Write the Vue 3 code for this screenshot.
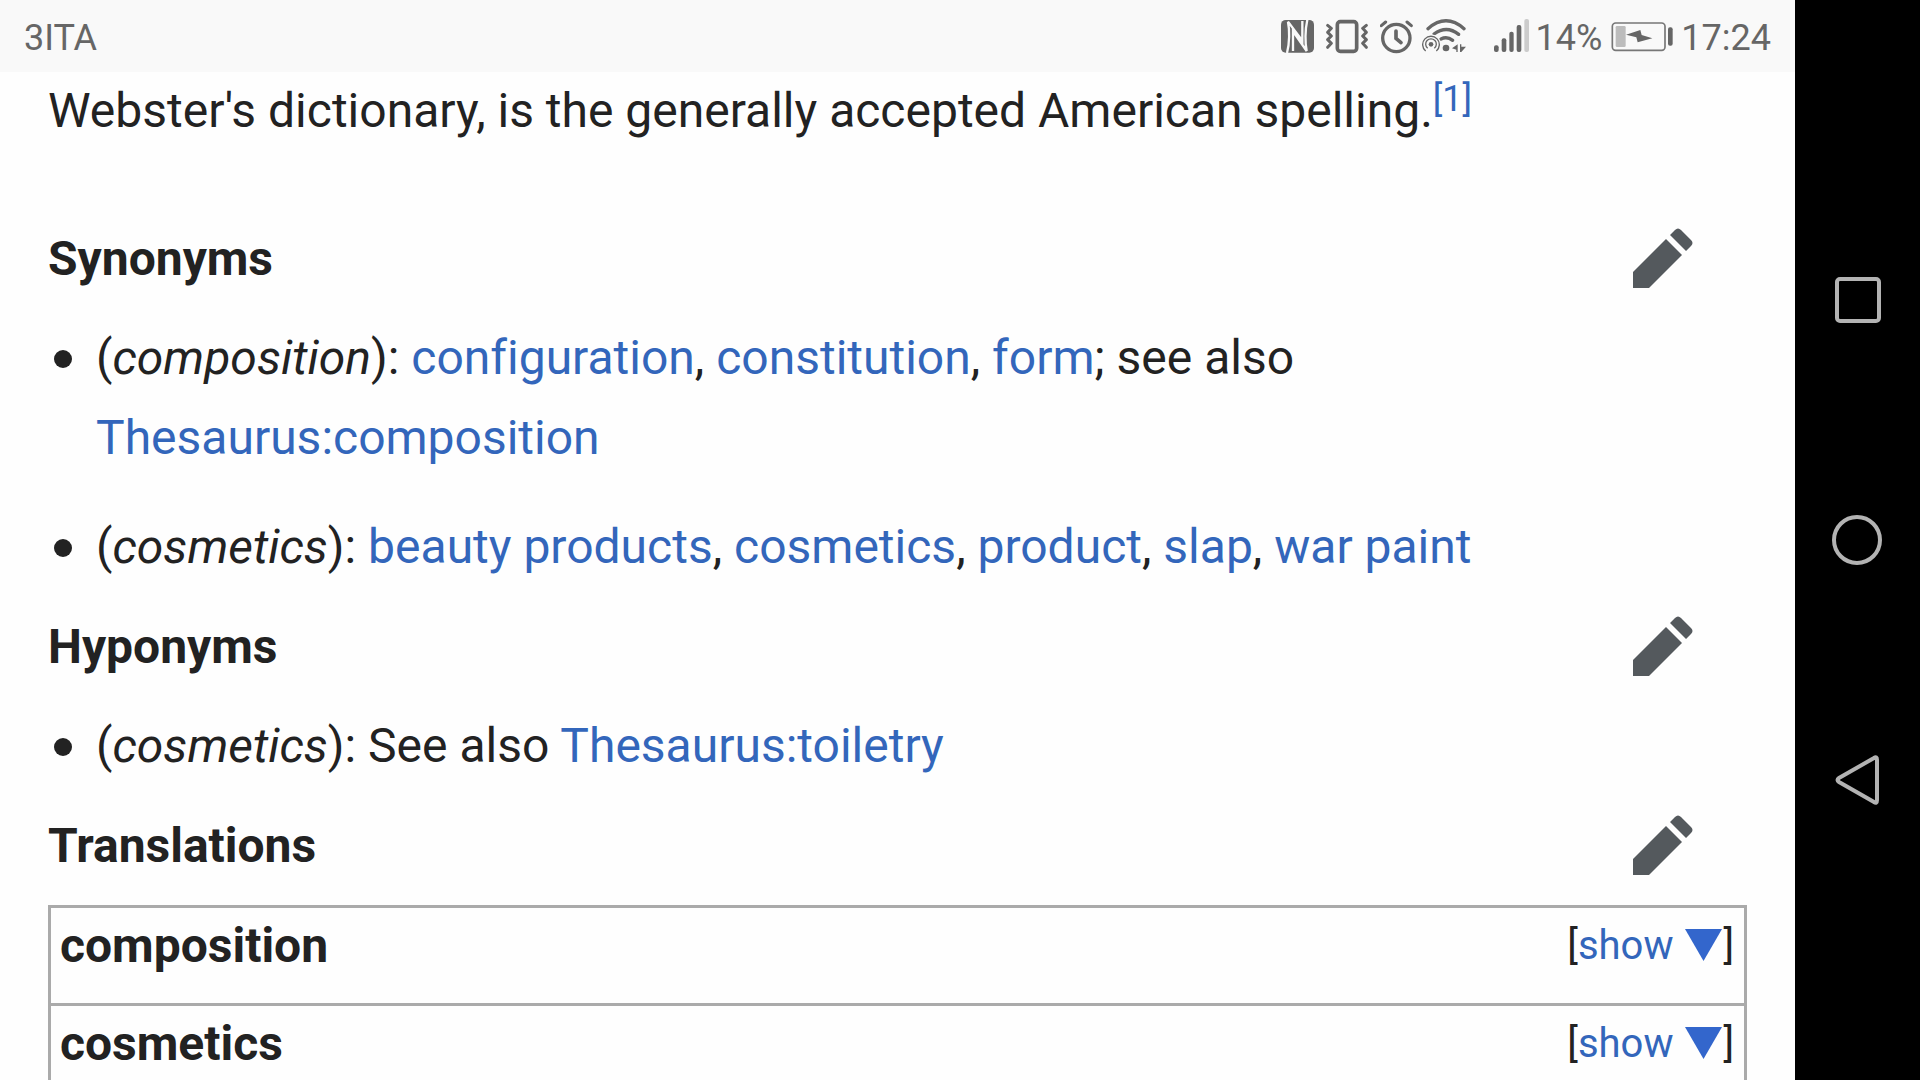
<script setup>
const translations = ['composition', 'cosmetics']
</script>

<template>
  <div class="screen">
    <div class="app">
      <header class="status">
        <span class="label carrier">3ITA</span>
        <svg class="nfc" viewBox="33 54 99 108" aria-label="NFC">
          <rect x="33" y="60" width="99" height="98" rx="14" fill="#666" />
          <path d="M51 159C59 130 59 90 54 65L97 122V63M112 59C105 90 105 130 110 153L69 94V153" fill="none" stroke="#f9f9f9" stroke-width="7" />
        </svg>
        <svg class="vibrate" viewBox="168 54 126 108" aria-label="Vibrate">
          <g fill="none" stroke="#666" stroke-linecap="round" stroke-linejoin="round">
            <rect x="202" y="65" width="58" height="89" rx="9" stroke-width="11" />
            <path d="M173 76l11 9-11 12 11 11-11 11 11 11-11 12M289 76l-11 9 11 12-11 11 11 11-11 11 11 12" stroke-width="9" />
          </g>
        </svg>
        <svg class="alarm" viewBox="331 54 99 108" aria-label="Alarm">
          <g fill="none" stroke="#666" stroke-linecap="round">
            <circle cx="380" cy="114" r="41" stroke-width="10" />
            <path d="M379 93V115L394 128" stroke-width="11" />
            <path d="M335 77L348 66M425 77L412 66" stroke-width="9" />
          </g>
        </svg>
        <svg class="wifi" viewBox="456 54 135 108" aria-label="Wi-Fi">
          <g fill="none" stroke="#666">
            <path d="M474 86Q528 39 582 86" stroke-width="10" stroke-linecap="round" />
            <path d="M492 102Q530 74 566 103" stroke-width="10" stroke-linecap="round" />
            <path d="M513 117Q531 108 548 121" stroke-width="10" stroke-linecap="round" />
            <circle cx="483" cy="132" r="29" fill="#f9f9f9" stroke="none" />
            <path d="M467 153A25 25 0 1 1 499 153" stroke-width="4" />
            <path d="M473 145A16 16 0 1 1 493 145" stroke-width="4" />
          </g>
          <g fill="#666">
            <circle cx="483" cy="133" r="7" />
            <circle cx="528" cy="144" r="10" />
            <path d="M546 145L563 133V156H559V149ZM570 133H574V140H588L574 156H570Z" />
          </g>
        </svg>
        <svg class="signal" viewBox="672 54 108 108" aria-label="Signal">
          <g fill="#666">
            <rect x="672" y="136" width="14" height="20" rx="6" />
            <rect x="695" y="115" width="14" height="41" rx="6" />
            <rect x="718" y="95" width="13" height="61" rx="6" />
            <rect x="740" y="75" width="14" height="81" rx="6" />
          </g>
          <rect x="763" y="57" width="14" height="99" rx="6" fill="#ccc" />
        </svg>
        <span class="label">14%</span>
        <svg class="battery" viewBox="390 54 186 108" aria-label="Charging">
          <rect x="394" y="69" width="158" height="82" rx="10" fill="none" stroke="#777" stroke-width="5" />
          <rect x="404" y="78" width="30" height="63" rx="4" fill="#bcbcbc" />
          <path d="M435 104L478 90L482 105L514 115L470 127L466 112Z" fill="#666" />
          <rect x="561" y="82" width="14" height="55" rx="6" fill="#666" />
        </svg>
        <span class="label">17:24</span>
      </header>

      <main class="article">
        <p class="note">Webster's dictionary, is the generally accepted American spelling.<sup><a href="#cite-1">[1]</a></sup></p>

        <section>
          <div class="heading">
            <h3>Synonyms</h3>
            <button class="edit" aria-label="Edit Synonyms"><svg viewBox="0 0 60 60"><path d="M0 44L33 11L49 27L16 60H0ZM37 7L42 2Q45 -1 48 2L58 12Q61 15 58 18L53 23Z" /></svg></button>
          </div>
          <ul>
            <li>(<i>composition</i>): <a href="#configuration">configuration</a>, <a href="#constitution">constitution</a>, <a href="#form">form</a>; see also <br><a href="#thesaurus-composition">Thesaurus:composition</a></li>
            <li>(<i>cosmetics</i>): <a href="#beauty-products">beauty products</a>, <a href="#cosmetics">cosmetics</a>, <a href="#product">product</a>, <a href="#slap">slap</a>, <a href="#war-paint">war paint</a></li>
          </ul>
        </section>

        <section>
          <div class="heading">
            <h3>Hyponyms</h3>
            <button class="edit" aria-label="Edit Hyponyms"><svg viewBox="0 0 60 60"><path d="M0 44L33 11L49 27L16 60H0ZM37 7L42 2Q45 -1 48 2L58 12Q61 15 58 18L53 23Z" /></svg></button>
          </div>
          <ul>
            <li>(<i>cosmetics</i>): See also <a href="#thesaurus-toiletry">Thesaurus:toiletry</a></li>
          </ul>
        </section>

        <section>
          <div class="heading">
            <h3>Translations</h3>
            <button class="edit" aria-label="Edit Translations"><svg viewBox="0 0 60 60"><path d="M0 44L33 11L49 27L16 60H0ZM37 7L42 2Q45 -1 48 2L58 12Q61 15 58 18L53 23Z" /></svg></button>
          </div>
          <div class="frames">
            <div v-for="name in translations" :key="name" class="frame">
              <b>{{ name }}</b>
              <span class="toggle">[<a :href="'#' + name">show <svg viewBox="0 0 37 32" aria-hidden="true"><path d="M0 0H37L18.5 32Z" /></svg></a>]</span>
            </div>
          </div>
        </section>
      </main>
    </div>

    <nav class="softkeys">
      <button aria-label="Recent apps"><svg viewBox="0 0 52 52"><rect x="5" y="5" width="42" height="42" rx="3" /></svg></button>
      <button aria-label="Home"><svg viewBox="0 0 52 52"><circle cx="25" cy="26" r="23" /></svg></button>
      <button aria-label="Back"><svg viewBox="0 0 52 52"><path d="M42 4Q45 2 45 6V46Q45 50 42 48L7 28Q4 26 7 24Z" /></svg></button>
    </nav>
  </div>
</template>

<style>
body {
  margin: 0;
}
</style>

<style scoped>
.screen {
  display: flex;
  height: 100vh;
  overflow: hidden;
  background: #fefefe;
  color: #222;
  font-family: Roboto, "Liberation Sans", sans-serif;
  font-size: 48px;
  font-variant-ligatures: none;
  line-height: 80px;
}
.app {
  flex: 1;
  min-width: 0;
}
a {
  color: #36b;
  text-decoration: none;
}
button {
  padding: 0;
  border: 0;
  background: none;
}
svg {
  display: block;
}
.status {
  display: flex;
  align-items: center;
  height: 72px;
  padding: 0 24px;
  background: #f9f9f9;
  color: #666;
}
.status svg {
  flex: none;
  height: 36px;
}
.label {
  padding-top: 3px;
  font-size: 36px;
  line-height: 42px;
}
.carrier {
  margin-right: auto;
}
.nfc {
  width: 33px;
  margin-right: 12px;
}
.vibrate {
  width: 42px;
  margin-right: 12px;
}
.alarm {
  width: 33px;
  margin-right: 9px;
}
.wifi {
  width: 45px;
  margin-right: 27px;
}
.signal {
  width: 36px;
  margin-right: 6px;
}
.battery {
  width: 62px;
  margin: 0 8px 0 9px;
}
.article {
  padding: 0 48px;
}
.note {
  margin: 0 0 69px;
  line-height: 78px;
}
sup {
  font-size: 36px;
  line-height: 0;
  vertical-align: 16px;
}
.heading {
  display: flex;
  align-items: center;
  justify-content: space-between;
  margin-bottom: 19px;
}
h3 {
  margin: 0;
  font-size: 48px;
  font-weight: 700;
}
.edit {
  margin: 0 54px 2px 0;
}
.edit svg {
  width: 60px;
  height: 60px;
  fill: #54595d;
}
ul {
  margin: 0 0 20px;
  padding: 0;
  list-style: none;
}
li {
  position: relative;
  padding-left: 48px;
}
li + li {
  margin-top: 29px;
}
li::before {
  content: "";
  position: absolute;
  left: 6px;
  top: 32px;
  width: 18px;
  height: 18px;
  border-radius: 50%;
  background: #222;
}
.frame {
  display: flex;
  justify-content: space-between;
  margin-bottom: -3px;
  padding: 0 10px 19px 9px;
  border: 3px solid #aaa;
  line-height: 76px;
}
.toggle {
  font-size: 40px;
}
.toggle svg {
  display: inline-block;
  width: 37px;
  height: 32px;
  margin: 0 1px 0 2px;
  fill: #36c;
  vertical-align: -2px;
}
.softkeys {
  display: flex;
  flex: none;
  flex-direction: column;
  align-items: center;
  justify-content: center;
  width: 125px;
  background: #000;
}
.softkeys button {
  display: flex;
  flex: 0 1 240px;
  align-items: center;
}
.softkeys svg {
  width: 52px;
  height: 52px;
  fill: none;
  stroke: #b3b3b3;
  stroke-width: 4;
}
</style>
